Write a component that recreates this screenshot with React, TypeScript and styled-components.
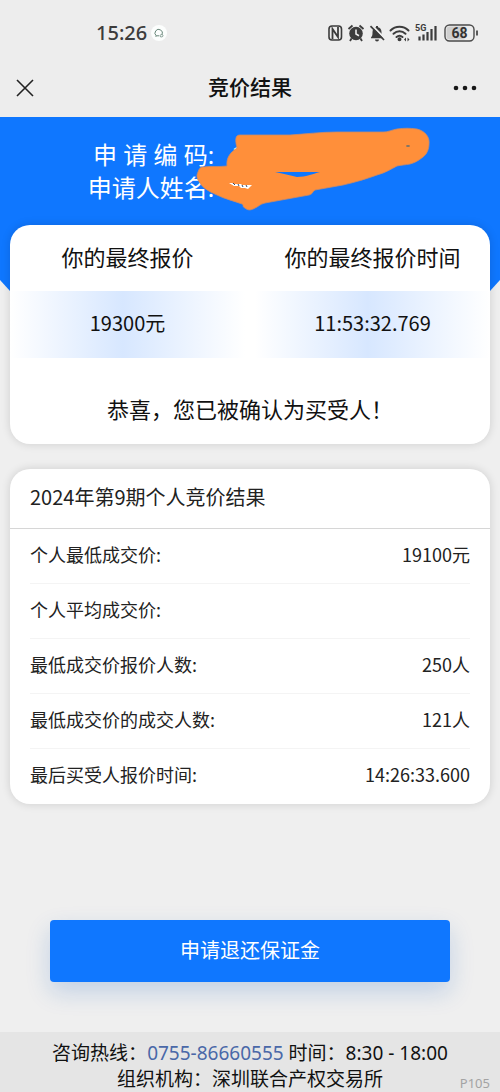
import React from "react";
import styled, { createGlobalStyle } from "styled-components";

const GlobalStyle = createGlobalStyle`
  * { box-sizing: border-box; }
  body {
    margin: 0;
    background: #efefef;
    color: #111;
    font-family: "Noto Sans CJK SC", sans-serif;
  }
`;

const Page = styled.div`
  min-height: 100vh;
  display: flex;
  flex-direction: column;
`;

const Main = styled.main`
  display: flex;
  flex-direction: column;
`;

const StatusBar = styled.div`
  display: flex;
  align-items: center;
  justify-content: space-between;
  height: 58px;
  padding: 8px 20px 0 96px;
  background: #ededed;
  color: #3c3c3c;
`;

const Clock = styled.div`
  display: flex;
  align-items: center;
  gap: 4px;
  font: 500 20px/24px "Noto Sans", sans-serif;
`;

const NavBar = styled.header`
  display: grid;
  grid-template-columns: 80px 1fr 80px;
  align-items: center;
  height: 59px;
  background: #ededed;
`;

const NavTitle = styled.h1`
  margin: 0;
  padding-bottom: 4px;
  text-align: center;
  font-size: 21px;
  font-weight: 500;
  line-height: 30px;
`;

const IconButton = styled.button<{ $end?: boolean }>`
  display: flex;
  justify-self: ${(p) => (p.$end ? "end" : "start")};
  margin: 0 16px;
  padding: 0;
  border: 0;
  background: none;
`;

const Hero = styled.section`
  height: 185px;
  padding-top: 21px;
  background: #0f77ff;
  color: #fff;
  clip-path: polygon(0 0, 100% 0, 100% 163px, calc(100% - 20px) 100%, 20px 100%, 0 163px);
`;

const Applicant = styled.dl`
  position: relative;
  display: grid;
  grid-template-columns: auto 180px;
  justify-content: center;
  margin: 0;
  font-family: "Noto Sans", "Noto Sans CJK SC", sans-serif;
  font-size: 24px;
  line-height: 33px;
`;

const ApplicantLabel = styled.dt`
  padding-right: 18px;
  text-align: right;
`;

const ApplicantValue = styled.dd`
  margin: 0;
`;

const Scribble = styled.svg`
  position: absolute;
  top: -11px;
  left: 50%;
  margin-left: -54px;
`;

const Card = styled.section`
  position: relative;
  margin: 0 10px 25px;
  border-radius: 20px;
  background: #fff;
  box-shadow: 0 0 10px rgba(0, 0, 0, 0.14);
`;

const OfferCard = styled(Card)`
  margin-top: -77px;
`;

const Offers = styled.div`
  display: grid;
  grid-template-columns: 1fr 1fr;
  gap: 10px;
`;

const OfferTitle = styled.h2`
  margin: 0;
  padding-bottom: 4px;
  text-align: center;
  font-size: 22px;
  font-weight: 400;
  line-height: 62px;
`;

const OfferValue = styled.div`
  padding-bottom: 3px;
  text-align: center;
  font-size: 20px;
  line-height: 64px;
  background: linear-gradient(90deg, #fff, #d7e7ff 48%, #fff);
`;

const Message = styled.p`
  margin: 0;
  padding: 34px 0 20px;
  text-align: center;
  font-size: 22px;
  line-height: 32px;
`;

const ResultTitle = styled.h2`
  margin: 0;
  padding: 0 20px 3px;
  border-bottom: 1px solid #d6d6d6;
  color: #222;
  font-size: 20px;
  font-weight: 400;
  line-height: 56px;
`;

const ResultBody = styled.div`
  padding: 0 20px;
`;

const ResultTable = styled.table`
  width: 100%;
  border-collapse: separate;
  border-spacing: 0;
  color: #222;
  font-size: 18px;
  line-height: 51px;

  th,
  td {
    padding: 0 0 3px;
    border-bottom: 1px solid #f4f4f4;
    font-weight: 400;
  }
  tr:last-child th,
  tr:last-child td {
    border-color: transparent;
  }
  th {
    text-align: left;
  }
  td {
    text-align: right;
  }
`;

const RefundButton = styled.button`
  margin: 91px 50px 50px;
  padding: 0 0 2px;
  border: 0;
  border-radius: 4px;
  background: #0f77ff;
  box-shadow: 0 10px 24px rgba(15, 90, 190, 0.2);
  color: #fff;
  font-family: inherit;
  font-size: 20px;
  line-height: 60px;
`;

const Footer = styled.footer`
  position: relative;
  margin-top: auto;
  padding-top: 8px;
  background: #e5e5e5;
  text-align: center;
  font-family: "Noto Sans", "Noto Sans CJK SC", sans-serif;
  font-size: 19px;
  line-height: 26px;

  a {
    color: #4a68a8;
    text-decoration: none;
  }
`;

const PageCode = styled.span`
  position: absolute;
  right: 10px;
  bottom: 0;
  color: #a3a3a3;
  font-size: 13px;
  line-height: 18px;
`;

const results = [
  ["个人最低成交价:", "19100元"],
  ["个人平均成交价:", ""],
  ["最低成交价报价人数:", "250人"],
  ["最低成交价的成交人数:", "121人"],
  ["最后买受人报价时间:", "14:26:33.600"],
];

function NotificationIcon() {
  return (
    <svg width="16" height="16" viewBox="0 0 16 16" fill="none">
      <circle cx="8" cy="8" r="8" fill="#fcfefd" />
      <path d="M5.2 10.8A3.7 3.7 0 1 1 11 9.7M5.2 10.8l-.4 1M5.2 10.8h3" stroke="#68877a" />
      <path d="M9 10.5c1-1.5 3.5-1 3 .5-.3 1-1.5 1-2.5.8z" stroke="#68877a" strokeWidth=".8" />
    </svg>
  );
}

function StatusGlyphs() {
  return (
    <svg width="152" height="24" viewBox="0 0 152 24" fill="none">
      <rect x="1" y="5" width="12.500" height="14" rx="3" stroke="#3c3c3c" strokeWidth="1.600" />
      <path d="M4.500 18V8l5.500 8V6" stroke="#3c3c3c" strokeWidth="1.800" />
      <circle cx="28" cy="12.500" r="6.800" fill="#3c3c3c" />
      <path d="M20.500 8l4-3.500M35.500 8l-4-3.500M23.500 17.500L22 20M32.500 17.500L34 20" stroke="#3c3c3c" strokeWidth="1.800" />
      <path d="M28 8.500v4.500l3 1.800" stroke="#ededed" strokeWidth="1.600" />
      <path d="M43 16.500c1.500-1.500 1.500-3 1.500-5.500 0-2.500 1.500-4.200 3.500-4.700V5h2v1.300c2 .5 3.500 2.200 3.500 4.700 0 2.500 0 4 1.500 5.500v.8H43z" fill="#3c3c3c" />
      <path d="M47 18.500h4a2 2 0 0 1-4 0z" fill="#3c3c3c" />
      <path d="M43.500 4L57 17.500" stroke="#ededed" strokeWidth="2" />
      <path d="M42.500 5.200L56 19" stroke="#3c3c3c" strokeWidth="1.700" />
      <g stroke="#3c3c3c" strokeWidth="2" strokeLinecap="round">
        <path d="M62.500 9.500c5-5 13-5 18 0M65.500 12.800c3.500-3.300 8.500-3.300 12 0M68.500 16c2-1.700 4-1.700 6 0" />
        <circle cx="71.500" cy="18.200" r="1" fill="#3c3c3c" />
      </g>
      <path d="M76 18.500l2-2v4zM81.500 18.500l-2-2v4z" fill="#3c3c3c" />
      <text x="87" y="10" fill="#3c3c3c" fontFamily="Roboto, sans-serif" fontSize="9" fontWeight="700">5G</text>
      <path d="M91.500 19.500v-4M95.500 19.500v-6M99.500 19.500v-8.500M103.500 19.500V8M107.500 19.500V5" stroke="#3c3c3c" strokeWidth="2.200" />
      <rect x="117" y="4" width="29" height="16" rx="4.500" stroke="#4a4a4a" strokeWidth="1.400" />
      <path d="M121.500 5.500h15v13h-15c-1.700 0-3-1-3-2.500V8c0-1.500 1.300-2.500 3-2.500z" fill="#cfcfcf" />
      <path d="M149 9.500v5" stroke="#4a4a4a" strokeWidth="1.800" />
      <text x="131.500" y="17" textAnchor="middle" fill="#333" fontFamily="Roboto, sans-serif" fontSize="14" fontWeight="700">68</text>
    </svg>
  );
}

export default function App() {
  return (
    <Page lang="zh-CN">
      <GlobalStyle />
      <StatusBar>
        <Clock>
          15:26
          <NotificationIcon />
        </Clock>
        <StatusGlyphs />
      </StatusBar>
      <NavBar>
        <IconButton aria-label="关闭">
          <svg width="18" height="18" viewBox="0 0 18 18">
            <path d="M1 1l16 16M17 1L1 17" stroke="#222" strokeWidth="1.600" />
          </svg>
        </IconButton>
        <NavTitle>竞价结果</NavTitle>
        <IconButton $end aria-label="更多">
          <svg width="38" height="18" viewBox="0 0 38 18" fill="#181818">
            <circle cx="10" cy="9" r="2.300" />
            <circle cx="19" cy="9" r="2.300" />
            <circle cx="28" cy="9" r="2.300" />
          </svg>
        </IconButton>
      </NavBar>
      <Main>
        <Hero>
          <Applicant>
            <ApplicantLabel>申 请 编 码:</ApplicantLabel>
            <ApplicantValue>2</ApplicantValue>
            <ApplicantLabel>申请人姓名:</ApplicantLabel>
            <ApplicantValue />
            <Scribble width="240" height="86" viewBox="0 0 240 86" aria-hidden="true">
              <path
                d="M41 21C39 13 39 8 44 8H94C110 7 125 5 141 5H187C193 5 195 3 201 2C208 1 214 1 221 2C229 4 234 10 233 17C233 22 231 27 227 30C222 34 218 36 214 37C209 38 205 38 201 39C195 42 189 46 181 48C170 52 160 55 147 58L119 63C116 65 117 67 113 68L69 76C64 77 62 80 59 81C56 83 52 84 49 81C46 80 48 78 46 77C38 74 29 72 21 68C12 64 7 61 4 56C1 52 0 49 2 45C3 42 4 40 7 40C15 39 23 40 31 39C30 30 35 25 41 21Z"
                fill="#ff8f3a"
                stroke="#c98c68"
                strokeWidth=".8"
              />
              <path d="M79 45H124C116 47 110 50 101 50C94 48 87 47 79 45Z" fill="#0f77ff" />
              <path d="M33 56h3l2 1h7l1 1h10l-4 4-3-1h-4l-2-2h-5z" fill="#fff" />
              <path d="M37 56l2 2M42 57l1 2M46 58l1 2M50 58l1 2" stroke="#334a6a" />
              <ellipse cx="212" cy="19" rx="2" ry="1" fill="#7c7468" />
            </Scribble>
          </Applicant>
        </Hero>
        <OfferCard>
          <Offers>
            <div>
              <OfferTitle>你的最终报价</OfferTitle>
              <OfferValue>19300元</OfferValue>
            </div>
            <div>
              <OfferTitle>你的最终报价时间</OfferTitle>
              <OfferValue>11:53:32.769</OfferValue>
            </div>
          </Offers>
          <Message>恭喜，您已被确认为买受人！</Message>
        </OfferCard>
        <Card>
          <ResultTitle>2024年第9期个人竞价结果</ResultTitle>
          <ResultBody>
            <ResultTable>
              <tbody>
                {results.map(([label, value]) => (
                  <tr key={label}>
                    <th scope="row">{label}</th>
                    <td>{value}</td>
                  </tr>
                ))}
              </tbody>
            </ResultTable>
          </ResultBody>
        </Card>
        <RefundButton>申请退还保证金</RefundButton>
      </Main>
      <Footer>
        <div>
          咨询热线：<a href="tel:0755-86660555">0755-86660555</a> 时间：8:30 - 18:00
        </div>
        <div>组织机构：深圳联合产权交易所</div>
        <PageCode>P105</PageCode>
      </Footer>
    </Page>
  );
}
